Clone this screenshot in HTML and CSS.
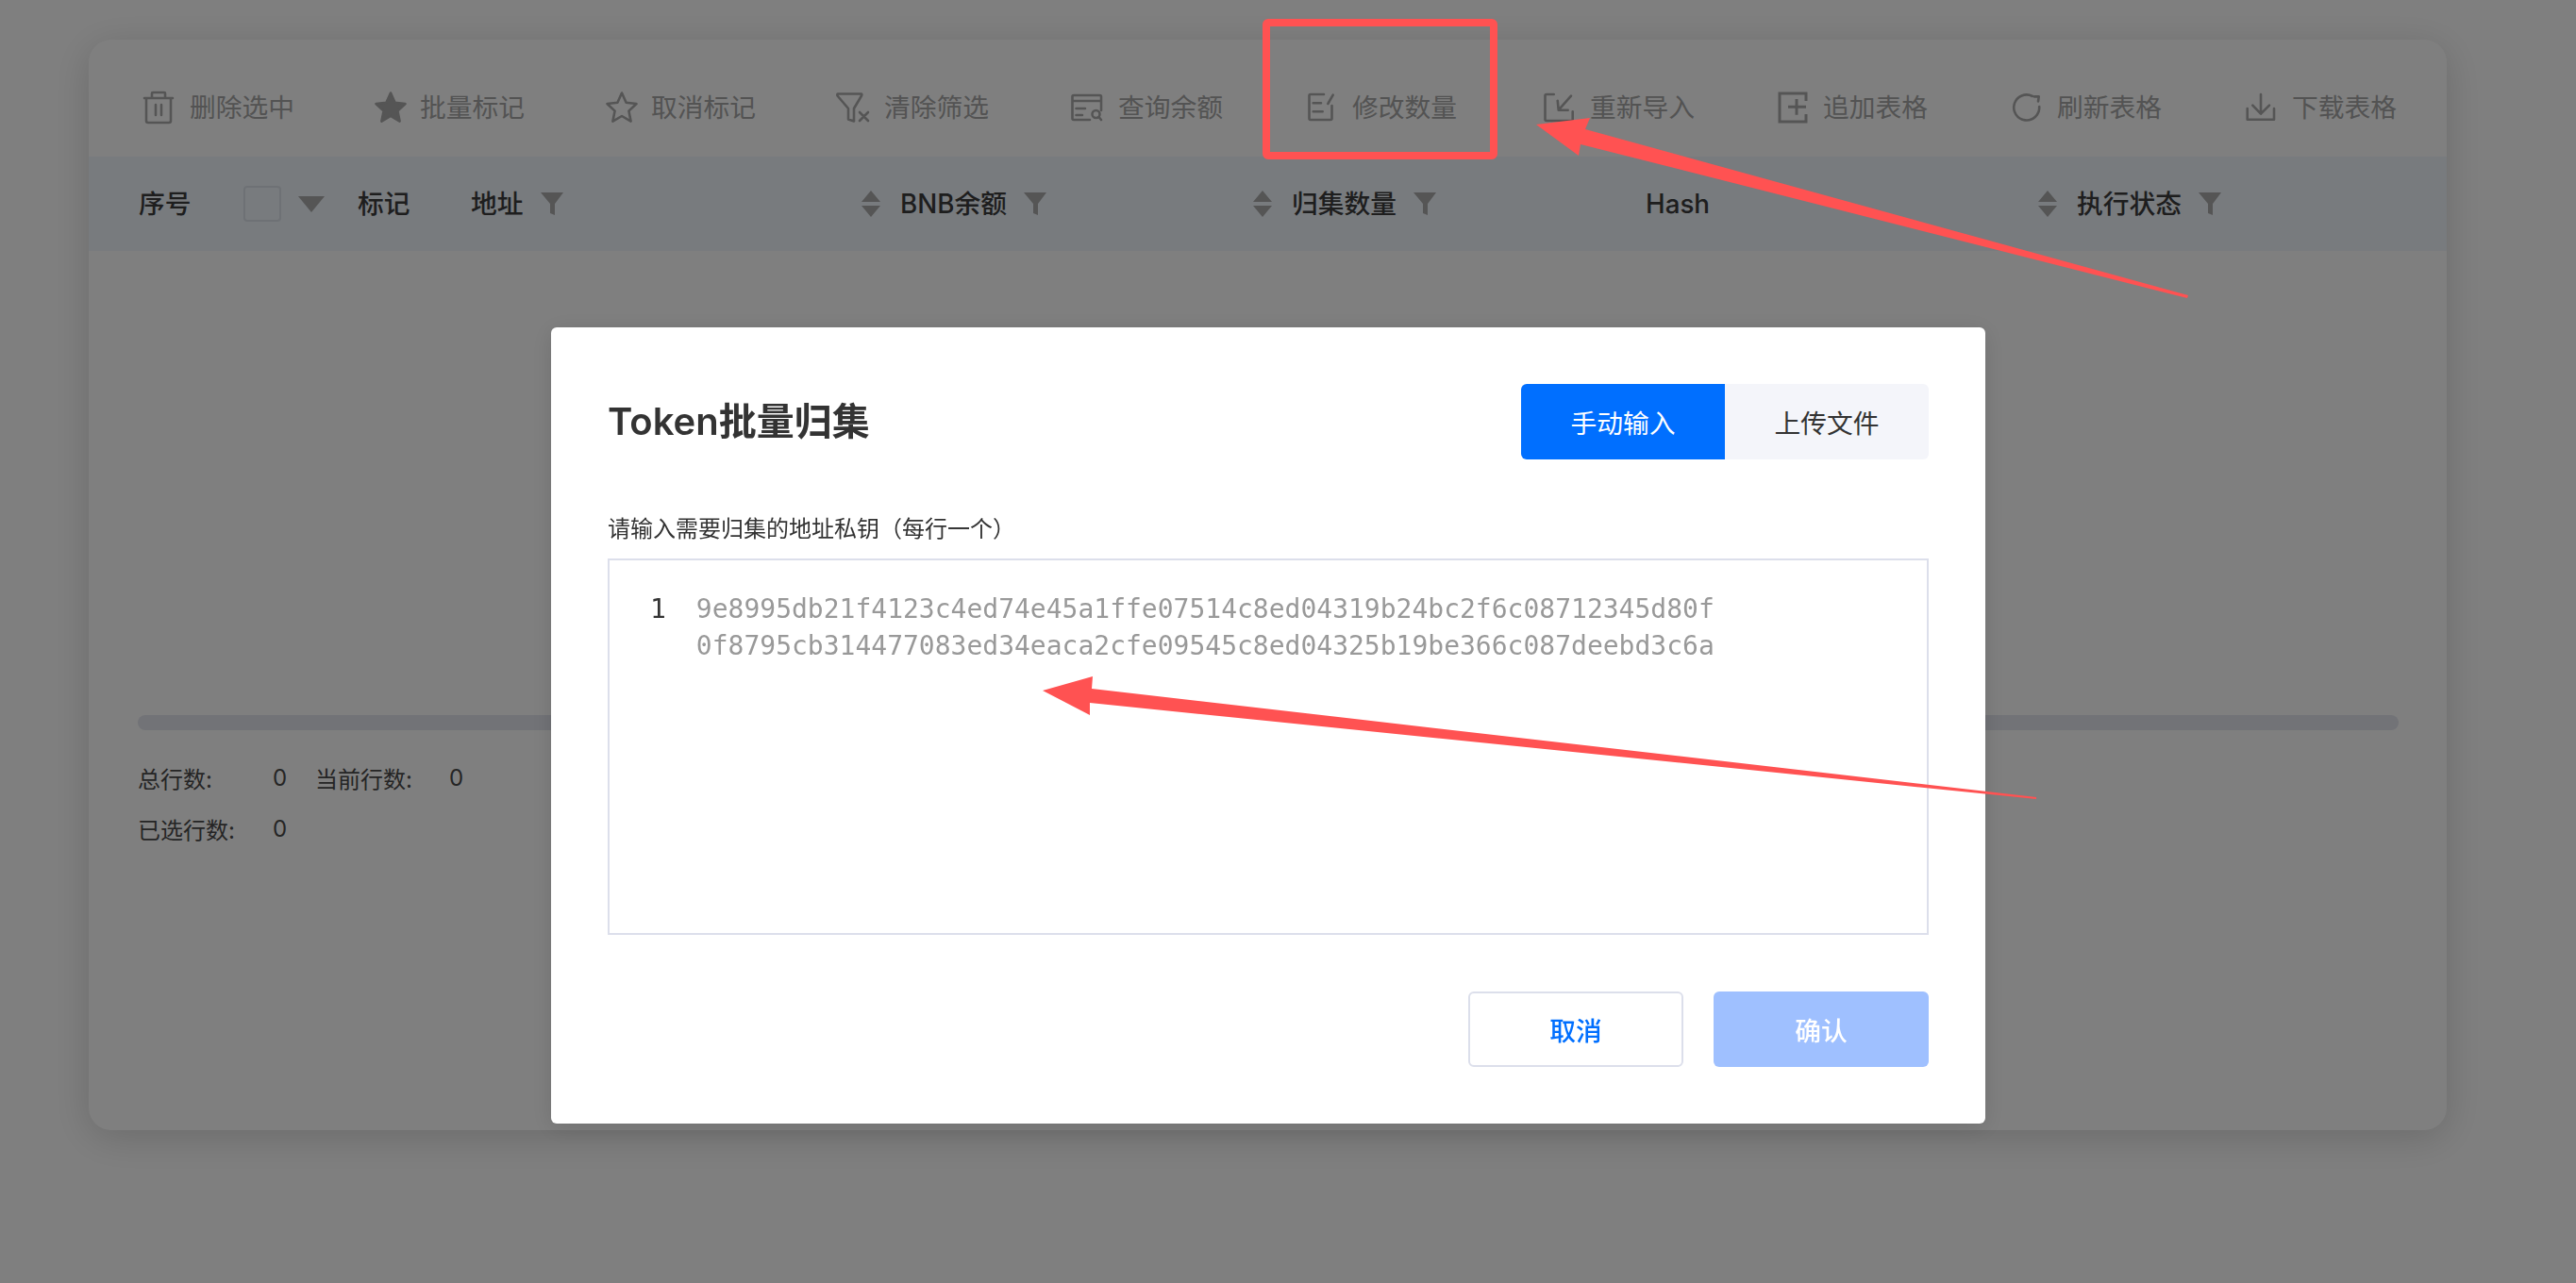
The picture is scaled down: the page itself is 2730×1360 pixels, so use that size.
FILE: index.html
```html
<!DOCTYPE html>
<html lang="zh-CN">
<head>
<meta charset="utf-8">
<title>Token批量归集</title>
<link rel="stylesheet" href="styles.css">
</head>
<body>
<main class="card">
  <div class="toolbar">
    <div class="tool">
      <svg class="tool-icon" viewBox="0 0 36 36"><path d="M1 8H31M9 8V3Q9 2 10 2H22Q23 2 23 3V8M3 8V32Q3 34 5 34H27Q29 34 29 32V8M13 15V26M19 15V26"/></svg>
      <span>删除选中</span>
    </div>
    <div class="tool">
      <svg class="tool-icon solid" viewBox="0 0 36 36"><path d="M18 2.500L22.600 12.800L33.500 14L25.400 21.600L27.600 32.600L18 27L8.400 32.600L10.600 21.600L2.500 14L13.400 12.800Z"/></svg>
      <span>批量标记</span>
    </div>
    <div class="tool">
      <svg class="tool-icon" viewBox="0 0 36 36"><path d="M18 2.500L22.600 12.800L33.500 14L25.400 21.600L27.600 32.600L18 27L8.400 32.600L10.600 21.600L2.500 14L13.400 12.800Z"/></svg>
      <span>取消标记</span>
    </div>
    <div class="tool">
      <svg class="tool-icon" viewBox="0 0 36 36"><path d="M0 3.500H24.500Q26 3.500 25 5.500L17 19V32.500L11 30.500V19L-0.500 5.500Q-1 3.500 0 3.500ZM23 23L32 32M32 23L23 32"/></svg>
      <span>清除筛选</span>
    </div>
    <div class="tool">
      <svg class="tool-icon" viewBox="0 0 36 36"><path d="M19 31H2Q0.500 31 0.500 29.500V6.500Q0.500 5 2 5H29.500Q31 5 31 6.500V21M0.500 11H31M4.500 19H14M4.500 26H11"/><circle cx="25.500" cy="25" r="4"/><path d="M28.500 28L31 31"/></svg>
      <span>查询余额</span>
    </div>
    <div class="tool">
      <svg class="tool-icon" viewBox="0 0 36 36"><path d="M19 4H5Q3.500 4 3.500 5.500V29.500Q3.500 31 5 31H26Q27.500 31 27.500 29.500V16M28.700 4.700L23.300 14M7.700 13.300H16M7.700 22.300H17.700"/></svg>
      <span>修改数量</span>
    </div>
    <div class="tool">
      <svg class="tool-icon" viewBox="0 0 36 36"><path d="M10.700 4H3Q1.500 4 1.500 5.500V30.500Q1.500 32 3 32H29Q30.700 32 30.700 30.500V22.300M29 5.700L15.700 20.700M14.700 10.700L15.700 20.700H25.700"/></svg>
      <span>重新导入</span>
    </div>
    <div class="tool">
      <svg class="tool-icon thick" viewBox="0 0 36 36"><path d="M31 11V3H3V33H31V25M21 9V25.700M12 17.300H31"/></svg>
      <span>追加表格</span>
    </div>
    <div class="tool">
      <svg class="tool-icon" viewBox="0 0 36 36"><path d="M23 6A13.500 13.500 0 1 0 30.200 17M25 6.400H29.700L29 11.500"/></svg>
      <span>刷新表格</span>
    </div>
    <div class="tool">
      <svg class="tool-icon" viewBox="0 0 36 36"><path d="M16 4V24M7.300 15.700L16 24.700L25 15.700M1.700 19V30.700H30V19"/></svg>
      <span>下载表格</span>
    </div>
  </div>

  <div class="table-head">
    <div class="cell">序号</div>
    <div class="cell gap-check">
      <span class="checkbox"></span>
      <svg class="caret" viewBox="0 0 28 17"><path d="M0 0H28L14 17Z"/></svg>
    </div>
    <div class="cell">标记</div>
    <div class="cell">地址<svg class="filter" viewBox="0 0 24 24"><path d="M0 0H24L15 12V24L10 22V12Z"/></svg></div>
    <div class="cell">
      <svg class="sort" viewBox="0 0 20 28"><path d="M10 0L20 12H0ZM0 16H20L10 28Z"/></svg>BNB余额<svg class="filter" viewBox="0 0 24 24"><path d="M0 0H24L15 12V24L10 22V12Z"/></svg>
    </div>
    <div class="cell">
      <svg class="sort" viewBox="0 0 20 28"><path d="M10 0L20 12H0ZM0 16H20L10 28Z"/></svg>归集数量<svg class="filter" viewBox="0 0 24 24"><path d="M0 0H24L15 12V24L10 22V12Z"/></svg>
    </div>
    <div class="cell">Hash</div>
    <div class="cell">
      <svg class="sort" viewBox="0 0 20 28"><path d="M10 0L20 12H0ZM0 16H20L10 28Z"/></svg>执行状态<svg class="filter" viewBox="0 0 24 24"><path d="M0 0H24L15 12V24L10 22V12Z"/></svg>
    </div>
  </div>

  <div class="table-body"></div>
  <div class="scrollbar"></div>

  <div class="stats">
    <span>总行数:</span><span>0</span><span>当前行数:</span><span>0</span>
    <span>已选行数:</span><span>0</span>
  </div>
</main>

<div class="overlay">
  <section class="modal">
    <header class="modal-head">
      <h1 class="modal-title">Token批量归集</h1>
      <div class="tabs">
        <div class="tab active">手动输入</div>
        <div class="tab">上传文件</div>
      </div>
    </header>
    <p class="field-label">请输入需要归集的地址私钥（每行一个）</p>
    <div class="editor">
      <div class="line-no">1</div>
      <div class="code">
        <div>9e8995db21f4123c4ed74e45a1ffe07514c8ed04319b24bc2f6c08712345d80f</div>
        <div>0f8795cb314477083ed34eaca2cfe09545c8ed04325b19be366c087deebd3c6a</div>
      </div>
    </div>
    <footer class="modal-foot">
      <div class="btn btn-ghost">取消</div>
      <div class="btn btn-primary">确认</div>
    </footer>
  </section>
</div>

<svg class="annotations" viewBox="0 0 2730 1360">
  <rect class="mark-box" x="1342" y="24" width="241" height="141" rx="2"/>
  <polygon class="mark-arrow" points="1628,132 1685,125 1680,137 2319,313 2318,316 1675,153 1673,165"/>
  <polygon class="mark-arrow" points="1105,732 1158,717 1157,730 2158,845 2158,847 1155,745 1155,758"/>
</svg>
</body>
</html>
```
FILE: styles.css
```css
* { box-sizing: border-box; }

html, body { margin: 0; height: 100%; }

body {
  background: #fff;
  padding: 42px 0 0 94px;
  width: 2730px;
  height: 1360px;
  overflow: hidden;
  font-family: Inter, "Noto Sans CJK SC", sans-serif;
}

.card {
  width: 2499px;
  height: 1156px;
  background: #fff;
  border-radius: 24px;
  box-shadow: 0 8px 40px rgba(0, 0, 0, .16);
  overflow: hidden;
}

.toolbar {
  height: 124px;
  padding: 20px 0 0 58px;
  display: grid;
  grid-template-columns: 244px 245px 247px 248px 248px 252px 247px 248px 249px auto;
  align-items: center;
}

.tool {
  display: flex;
  align-items: center;
  gap: 13px;
  font-size: 27.750px;
  line-height: 40px;
  color: #a6a6a6;
}

.tool-icon {
  flex: none;
  width: 36px;
  height: 36px;
  fill: none;
  stroke: #aaa;
  stroke-width: 2.600;
  stroke-linejoin: round;
  stroke-linecap: round;
  overflow: visible;
}

.tool-icon.solid { fill: #aaa; }

.tool-icon.thick { stroke-width: 3; stroke-linejoin: miter; stroke-linecap: butt; }

.table-head {
  height: 100px;
  background: #f0f6fc;
  padding-left: 53px;
  display: grid;
  grid-template-columns: 111px 121px 120px 414px 415px 416px 416px auto;
  align-items: center;
  font-size: 27.750px;
  font-weight: 500;
  line-height: 40px;
  color: #3c3c3c;
}

.cell { display: flex; align-items: center; }

.gap-check { gap: 18px; }

.checkbox {
  width: 40px;
  height: 38px;
  border: 2px solid #dce3ea;
  border-radius: 4px;
}

.caret { width: 28px; height: 17px; fill: #aaa; }

.filter { width: 24px; height: 24px; margin-left: 18px; fill: #aaa; }

.sort { width: 20px; height: 28px; margin-right: 21px; fill: #aaa; }

.table-body { height: 492px; }

.scrollbar {
  height: 16px;
  margin: 0 51px 0 52px;
  background: #e4e6ee;
  border-radius: 8px;
}

.stats {
  margin: 23px 0 0 52px;
  display: grid;
  grid-template-columns: 143px 45px 142px auto;
  grid-auto-rows: 54px;
  align-items: center;
  font-size: 24px;
  color: #4a4a4a;
}

.overlay {
  position: fixed;
  inset: 0;
  background: rgba(0, 0, 0, .5);
  padding: 347px 0 0 584px;
}

.modal {
  width: 1520px;
  height: 844px;
  padding: 60px;
  background: #fff;
  border-radius: 6px;
  box-shadow: 0 4px 24px rgba(0, 0, 0, .12);
}

.modal-head {
  display: flex;
  justify-content: space-between;
  align-items: center;
  height: 80px;
}

.modal-title {
  margin: 0;
  font-size: 40px;
  font-weight: 600;
  line-height: 56px;
  color: #333;
}

.tabs {
  display: flex;
  border-radius: 6px;
  overflow: hidden;
}

.tab {
  width: 216px;
  height: 80px;
  display: flex;
  align-items: center;
  justify-content: center;
  font-size: 27.750px;
  color: #333;
  background: #f4f5fa;
}

.tab.active { background: #006fff; color: #fff; }

.field-label {
  margin: 54px 0 11px;
  font-size: 24px;
  line-height: 40px;
  color: #333;
}

.editor {
  height: 399px;
  border: 2px solid #dcdfeb;
  padding: 32px 0 0 43px;
  display: flex;
  gap: 32px;
  font-family: "DejaVu Sans Mono", monospace;
  font-size: 28px;
  line-height: 39px;
}

.line-no { color: #333; }

.code { color: #999; }

.modal-foot {
  margin-top: 60px;
  display: flex;
  justify-content: flex-end;
  gap: 32px;
}

.btn {
  width: 228px;
  height: 80px;
  display: flex;
  align-items: center;
  justify-content: center;
  border-radius: 6px;
  font-size: 27.750px;
  font-weight: 500;
}

.btn-ghost { border: 2px solid #dcdfeb; color: #006fff; }

.btn-primary { background: #9fc0ff; color: #fff; }

.annotations {
  position: absolute;
  left: 0;
  top: 0;
  width: 2730px;
  height: 1360px;
  pointer-events: none;
}

.mark-box { fill: none; stroke: #ff5252; stroke-width: 8; }

.mark-arrow { fill: #ff5252; }
```
